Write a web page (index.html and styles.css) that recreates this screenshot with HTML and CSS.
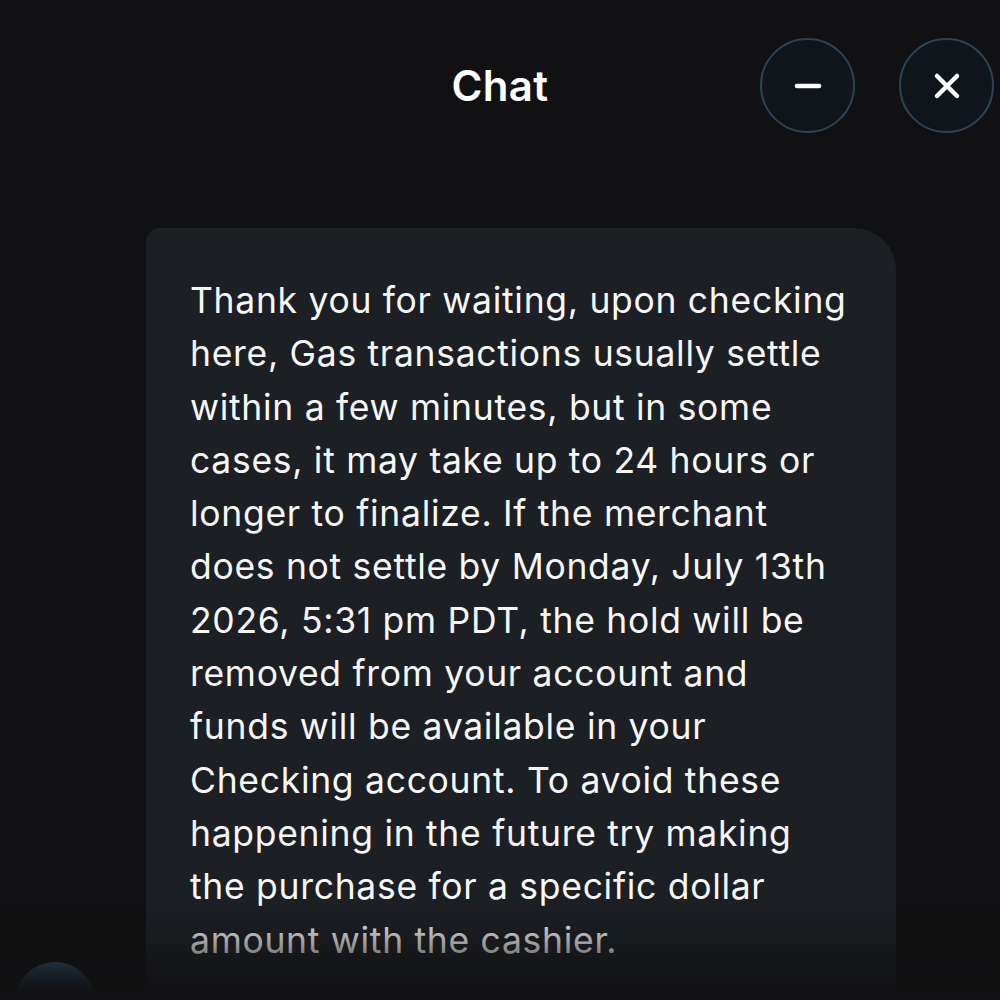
FILE: index.html
```html
<!DOCTYPE html>
<html lang="en">
<head>
    <meta charset="UTF-8">
    <meta name="viewport" content="width=device-width, initial-scale=1.0">
    <title>Chat</title>
    <link rel="stylesheet" href="styles.css">
</head>
<body>
    <div class="chat">
        <header class="chat-header">
            <h1>Chat</h1>
            <div class="header-actions">
                <button class="round-button" aria-label="Minimize">
                    <svg width="28" height="28" viewBox="0 0 28 28"><path d="M3 14h22" stroke="#fff" stroke-width="4.5" stroke-linecap="round"/></svg>
                </button>
                <button class="round-button" aria-label="Close">
                    <svg width="28" height="28" viewBox="0 0 28 28"><path d="M4 4l20 20M24 4L4 24" stroke="#fff" stroke-width="4.5" stroke-linecap="round"/></svg>
                </button>
            </div>
        </header>

        <!-- Agent message -->
        <div class="message-row">
            <div class="avatar"></div>
            <div class="bubble">
                Thank you for waiting, upon checking here, Gas transactions usually settle within a few minutes, but in some cases, it may take up to 24 hours or longer to finalize. If the merchant does not settle by Monday, July 13th 2026, 5:31 pm PDT, the hold will be removed from your account and funds will be available in your Checking account. To avoid these happening in the future try making the purchase for a specific dollar amount with the cashier.
            </div>
        </div>
    </div>
    <div class="bottom-fade"></div>
</body>
</html>
```

FILE: styles.css
```css
html, body {
    margin: 0;
    height: 100%;
}
body {
    background-color: #111113;
    color: #fff;
    font-family: Inter, "Noto Sans", sans-serif;
    overflow: hidden;
}
.chat {
    display: flex;
    flex-direction: column;
}
.chat-header {
    position: relative;
    display: flex;
    justify-content: center;
    align-items: center;
    height: 96px;
    padding-top: 37px;
}
.chat-header h1 {
    margin: 0;
    font-size: 42px;
    font-weight: 600;
    letter-spacing: 0.3px;
}
.header-actions {
    position: absolute;
    right: 6px;
    top: 38px;
    display: flex;
    gap: 44px;
}
.round-button {
    width: 95px;
    height: 95px;
    border-radius: 50%;
    background-color: #0f151b;
    border: 2.5px solid #2d4354;
    display: flex;
    justify-content: center;
    align-items: center;
    padding: 0;
}
.message-row {
    display: flex;
    align-items: flex-end;
    margin-top: 95px;
    padding-left: 15px;
}
.avatar {
    width: 80px;
    height: 80px;
    flex-shrink: 0;
    border-radius: 50%;
    background: linear-gradient(#3e6482, #1a2d3c 60%);
    margin-right: 51px;
    margin-bottom: -3px;
}
.bubble {
    width: 750px;
    box-sizing: border-box;
    background-color: #1c1f24;
    border-radius: 14px 42px 14px 14px;
    padding: 46px 44px 72px 44px;
    font-size: 35.5px;
    line-height: 53.3px;
    letter-spacing: 0.7px;
    color: #f7f7f7;
}
.bottom-fade {
    position: fixed;
    left: 0;
    right: 0;
    bottom: 0;
    height: 95px;
    background: linear-gradient(rgba(17, 17, 19, 0), rgba(17, 17, 19, 0.35) 37%, rgba(17, 17, 19, 0.75) 70%, #111113 95%);
    pointer-events: none;
}
```
